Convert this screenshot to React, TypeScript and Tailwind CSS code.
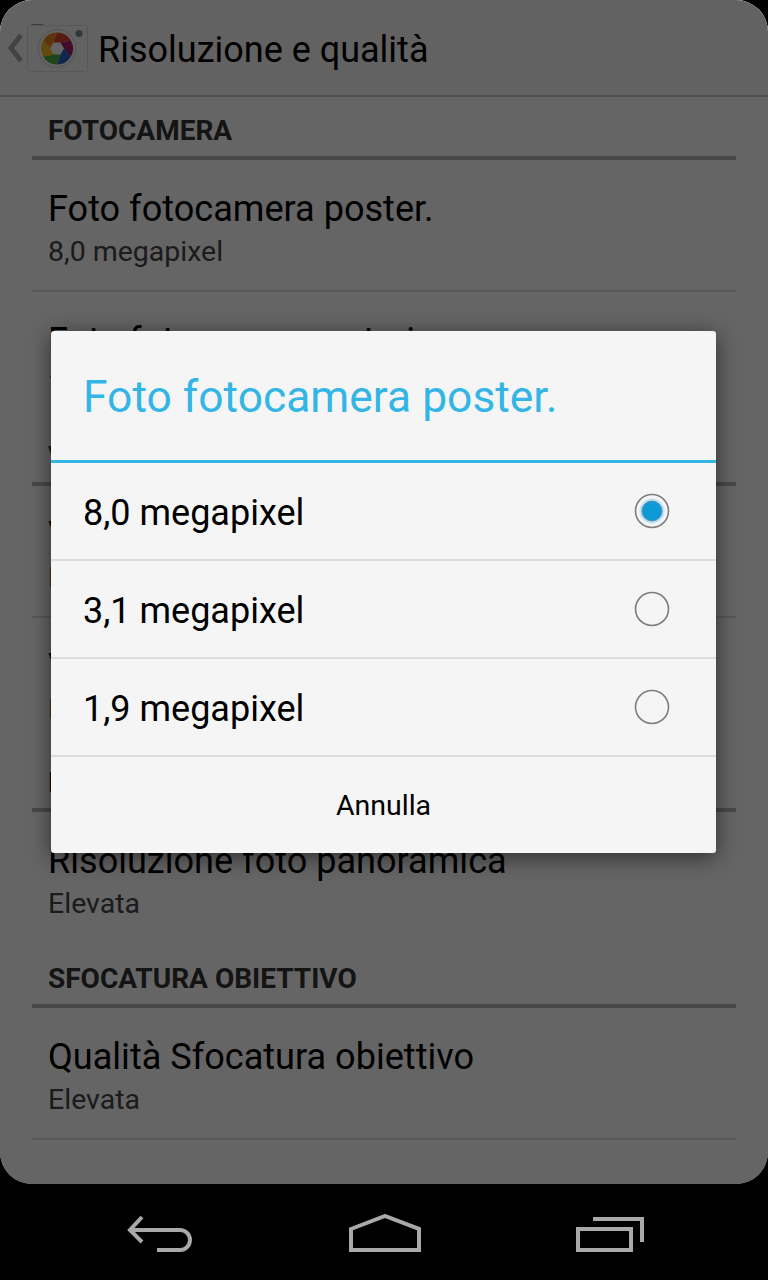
const font = { fontFamily: "Roboto, sans-serif" };

type Item = { title: string; sub: string; divider?: boolean };
type Section = { header: string; items: Item[] };

const sections: Section[] = [
  {
    header: "FOTOCAMERA",
    items: [
      { title: "Foto fotocamera poster.", sub: "8,0 megapixel", divider: true },
      { title: "Foto fotocamera anteriore", sub: "1,2 megapixel" },
    ],
  },
  {
    header: "VIDEOCAMERA",
    items: [
      { title: "Video fotocamera poster.", sub: "HD 1080p", divider: true },
      { title: "Video fotocamera anteriore", sub: "HD 720p" },
    ],
  },
  {
    header: "PANORAMA",
    items: [{ title: "Risoluzione foto panoramica", sub: "Elevata" }],
  },
  {
    header: "SFOCATURA OBIETTIVO",
    items: [{ title: "Qualità Sfocatura obiettivo", sub: "Elevata", divider: true }],
  },
];

const options = ["8,0 megapixel", "3,1 megapixel", "1,9 megapixel"];

const CameraIcon = () => {
  const blades = ["#e8821e", "#d8432a", "#a01f6a", "#2b5fc4", "#4caf3f", "#f2b81f"];
  const pt = (r: number, deg: number) => {
    const a = (deg * Math.PI) / 180;
    return `${30 + r * Math.cos(a)} ${24.5 + r * Math.sin(a)}`;
  };
  return (
    <svg width="62" height="48" viewBox="0 0 62 48" className="shrink-0">
      <rect x="4" y="0" width="13" height="4" rx="1.5" fill="#8f9a9c" />
      <rect x="0.5" y="1.5" width="60" height="46" rx="2" fill="#f6f6f6" stroke="#dcdcdc" />
      <circle cx="52" cy="9.5" r="3.5" fill="#6f8f98" />
      <circle cx="30" cy="24.5" r="19.5" fill="#dddddd" />
      <circle cx="30" cy="24.5" r="18" fill="#fafafa" />
      {blades.map((c, i) => {
        const h = -180 + i * 60;
        return (
          <path
            key={c}
            d={`M${pt(7, h)} L${pt(16, h + 30)} A16 16 0 0 1 ${pt(16, h + 90)} L${pt(7, h + 60)} Z`}
            fill={c}
          />
        );
      })}
    </svg>
  );
};

const Radio = ({ checked }: { checked: boolean }) => (
  <svg width="36" height="36" viewBox="0 0 36 36">
    <circle cx="18" cy="18" r="16.5" fill="#f5f5f5" stroke="#7d7d7d" strokeWidth="1.6" />
    {checked && (
      <>
        <circle cx="18" cy="18" r="12.5" fill="#bfe3f2" />
        <circle cx="18" cy="18" r="10" fill="#0d9ad6" stroke="#5b8fa8" strokeWidth="1" />
      </>
    )}
  </svg>
);

export default function App() {
  return (
    <div className="flex h-[1280px] w-[768px] flex-col overflow-hidden bg-black" style={font}>
      <div className="relative h-[1184px] shrink-0 overflow-hidden rounded-[32px] bg-[#fcfcfc]">
        <div className="flex h-[97px] items-center border-b-2 border-[#c8c8c8] bg-[#f4f4f4]">
          <svg width="16" height="30" viewBox="0 0 16 30" className="ml-[7px] mr-[4px] shrink-0">
            <path d="M14 2 L4 15 L14 28" fill="none" stroke="#a8a8a8" strokeWidth="5" />
          </svg>
          <CameraIcon />
          <h1 className="ml-[9px] pt-[4px] text-[36px] leading-none text-black">Risoluzione e qualità</h1>
        </div>

        <div className="px-[32px]">
          {sections.map((s) => (
            <section key={s.header} className={s.header === "PANORAMA" ? "pb-[2px]" : ""}>
              <div className="flex h-[63px] items-end border-b-[4px] border-[#b4b4b4] px-[16px] pb-[9px]">
                <h2 className="text-[28px] font-bold leading-[32px] text-[#333]">{s.header}</h2>
              </div>
              {s.items.map((item) => (
                <div
                  key={item.title}
                  className={`px-[16px] pt-[25px] ${item.divider ? "h-[132px] border-b-2 border-[#dcdcdc]" : "h-[131px]"}`}
                >
                  <div className="text-[36.1px] leading-[48px] text-black">{item.title}</div>
                  <div className="mt-[-1px] text-[28.5px] leading-[40px] text-[#444]">{item.sub}</div>
                </div>
              ))}
            </section>
          ))}
        </div>

        <div className="absolute inset-0 flex items-center bg-black/60 pl-[51px] pr-[52px]">
          <div className="w-full overflow-hidden rounded-[3px] bg-[#f5f5f5] shadow-[0_4px_22px_rgba(0,0,0,0.55)]">
            <div className="flex h-[129px] items-center px-[32px] pt-[3px]">
              <h3 className="text-[44.4px] leading-none text-[#33b5e5]">Foto fotocamera poster.</h3>
            </div>
            <div className="h-[3px] bg-[#33b5e5]" />
            {options.map((o, i) => (
              <div
                key={o}
                className="flex h-[98px] items-center justify-between border-b-2 border-[#dcdcdc] pl-[32px] pr-[46px]"
              >
                <span className="pt-[4px] text-[36px] leading-none text-black">{o}</span>
                <Radio checked={i === 0} />
              </div>
            ))}
            <div className="flex h-[96px] items-center justify-center pt-[3px] text-[28.5px] text-black">Annulla</div>
          </div>
        </div>
      </div>

      <nav className="flex flex-1 items-start justify-between pl-[127px] pr-[124px] pt-[30px]">
        <svg width="66" height="38" viewBox="0 0 66 38">
          <path
            d="M15 3 L3 16 L15 28 M3 16 H53 A10 10 0 0 1 53 36 H30"
            fill="none"
            stroke="#a9a9a9"
            strokeWidth="4"
          />
        </svg>
        <svg width="72" height="38" viewBox="0 0 72 38">
          <path d="M2 15 L36 2 L70 15 V36 H2 Z" fill="none" stroke="#a9a9a9" strokeWidth="4" />
        </svg>
        <svg width="68" height="38" viewBox="0 0 68 38">
          <path
            d="M17 5 H66 V28 M2 15 H55 V36 H2 Z"
            fill="none"
            stroke="#a9a9a9"
            strokeWidth="4"
          />
        </svg>
      </nav>
    </div>
  );
}
